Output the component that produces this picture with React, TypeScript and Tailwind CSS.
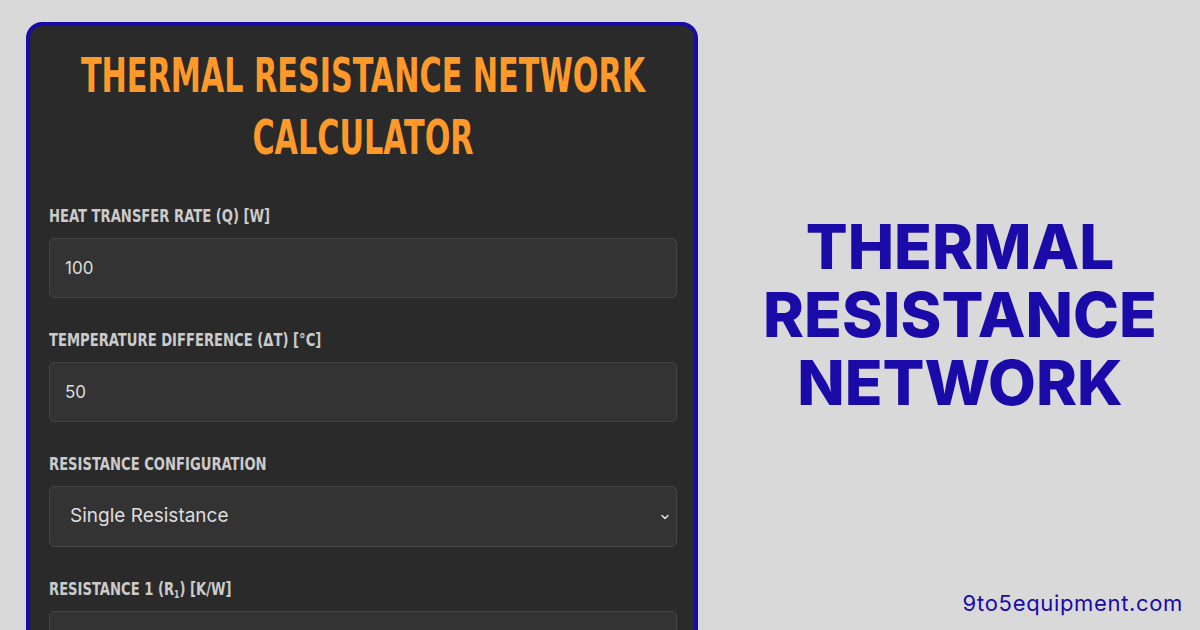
import { ChevronDown } from "lucide-react";

const fields = [
  { label: "Heat Transfer Rate (Q) [W]", value: "100" },
  { label: "Temperature Difference (ΔT) [°C]", value: "50" },
];

function Label({ children }: { children: React.ReactNode }) {
  return (
    <div className="h-[14px]">
      <label className="inline-block origin-left scale-x-[0.86] whitespace-nowrap font-['DejaVu_Sans_Condensed','DejaVu_Sans',sans-serif] text-[17px] font-bold uppercase leading-[14px] text-[#cbcbcb]">
        {children}
      </label>
    </div>
  );
}

function Field({ label, value }: { label: React.ReactNode; value: string }) {
  return (
    <div className="mb-[30px]">
      <Label>{label}</Label>
      <input
        readOnly
        value={value}
        className="mt-[20px] h-[60px] w-full rounded-[5px] border border-[#454545] bg-[#333333] px-[15px] font-['Inter',sans-serif] text-[17px] text-[#dedede] outline-none"
      />
    </div>
  );
}

function TitleLine({ children }: { children: React.ReactNode }) {
  return (
    <span className="flex justify-center">
      <span className="shrink-0 scale-x-[0.7] whitespace-nowrap">{children}</span>
    </span>
  );
}

export default function App() {
  return (
    <div className="flex h-[630px] w-[1200px] overflow-hidden bg-[#d9d9d9]">
      {/* calculator card, runs off the bottom edge */}
      <div className="ml-[26px] mt-[22px] h-[640px] w-[672px] shrink-0 rounded-[16px] border-4 border-[#1a0aa8] bg-[#2a2a2a] pl-[19px] pr-[17px] pt-[18px]">
        <h1 className="font-['DejaVu_Sans_Condensed','DejaVu_Sans',sans-serif] text-[48px] font-bold uppercase leading-[62px] text-[#ff9a2a]">
          <TitleLine>Thermal Resistance Network</TitleLine>
          <TitleLine>Calculator</TitleLine>
        </h1>

        <div className="mt-[36px]">
          {fields.map((f) => (
            <Field key={f.label} label={f.label} value={f.value} />
          ))}

          <div className="mb-[30px]">
            <Label>Resistance Configuration</Label>
            <div className="relative mt-[20px]">
              <select
                defaultValue="single"
                className="h-[61px] w-full appearance-none rounded-[5px] border border-[#454545] bg-[#333333] px-[20px] font-['Inter',sans-serif] text-[19px] text-[#dedede] outline-none"
              >
                <option value="single">Single Resistance</option>
                <option value="series">Series</option>
                <option value="parallel">Parallel</option>
              </select>
              <ChevronDown
                size={12}
                strokeWidth={3}
                className="pointer-events-none absolute right-[6px] top-1/2 -translate-y-1/2 text-[#e5e5e5]"
              />
            </div>
          </div>

          <Field
            label={
              <>
                Resistance 1 (R<sub className="text-[10px]">1</sub>) [K/W]
              </>
            }
            value=""
          />
        </div>
      </div>

      <div className="flex flex-1 flex-col pl-[22px]">
        <div className="h-[44px]" />
        <div className="flex flex-1 items-center justify-center">
          <h2 className="text-center font-['Inter',sans-serif] text-[62px] font-extrabold uppercase leading-[68px] text-[#1a0aa8]">
            Thermal
            <br />
            Resistance
            <br />
            Network
          </h2>
        </div>
        <div className="flex h-[44px] items-end justify-end pb-[16px] pr-[17px]">
          <span className="font-['Inter',sans-serif] text-[22px] leading-none tracking-[0.03em] text-[#1a0aa8]">
            9to5equipment.com
          </span>
        </div>
      </div>
    </div>
  );
}
